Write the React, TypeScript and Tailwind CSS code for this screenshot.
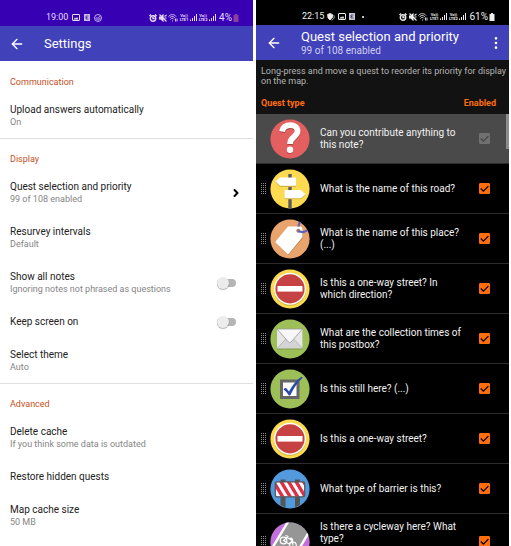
import React from 'react';
import { ArrowLeft, ChevronRight, EllipsisVertical } from 'lucide-react';

// Status bar glyphs
const PictureIcon = () => (
  <svg viewBox="0 0 16 14" className="w-2 h-[7px]">
    <rect x="1" y="1" width="14" height="12" rx="1" fill="none" stroke="currentColor" strokeWidth="2" />
    <path d="M3 11l3-4 2 2 2-3 3 5z" fill="currentColor" />
  </svg>
);

const CardIcon = () => (
  <svg viewBox="0 0 12 14" className="w-[6px] h-[7px]">
    <rect width="12" height="14" fill="currentColor" opacity=".85" />
    <path d="M4 4h5M4 7h3M4 10h5M4 4v6" stroke="#3a2a80" strokeWidth="1.6" fill="none" />
  </svg>
);

const SwirlIcon = () => (
  <svg viewBox="0 0 16 16" className="size-2" fill="none" stroke="currentColor" strokeWidth="1.6">
    <circle cx="8" cy="8" r="7" />
    <path d="M4 8c0 5 8 5 8 0M5 6l3 3 4-5" />
  </svg>
);

const ShieldIcon = () => (
  <svg viewBox="0 0 16 16" className="size-2" fill="none" stroke="currentColor" strokeWidth="1.6">
    <path d="M1 3l5-2 5 2v6l-5 5-4-4z" fill="currentColor" />
    <path d="M13 4c3 4 1 9-4 10" />
  </svg>
);

const AlarmIcon = () => (
  <svg viewBox="0 0 16 16" className="size-2" fill="none" stroke="currentColor" strokeWidth="2.8">
    <circle cx="8" cy="9" r="5.4" />
    <path d="M8 6v3h3M1 4l3-3M15 4l-3-3" />
  </svg>
);

const MuteIcon = () => (
  <svg viewBox="0 0 16 16" className="size-2" fill="none" stroke="currentColor" strokeWidth="2.2">
    <path d="M1 6h3l4-4v12l-4-4H1z" fill="currentColor" />
    <path d="M1 1l14 14M11 5l4-3M11 8h4M11 11l3 2" />
  </svg>
);

const WifiIcon = () => (
  <svg viewBox="0 0 20 16" className="w-[10px] h-2" fill="none" stroke="currentColor" strokeWidth="1.8">
    <path d="M1 5c4-5 12-5 15 0M3 8c3-4 8-4 11 0M5 11c2-3 5-3 7 0M8 14h2M15 9v6M18 15V9" />
  </svg>
);

const SignalIcon = () => (
  <svg viewBox="0 0 14 14" className="w-[7px] h-[7px]" fill="currentColor">
    <path d="M0 11h2v3H0zM4 8h2v6H4zM8 4h2v10H8zM12 0h2v14h-2z" />
  </svg>
);

const BatteryIcon = ({ className }: { className: string }) => (
  <svg viewBox="0 0 12 16" className={className}>
    <path d="M4 0h4v2h3v14H1V2h3z" fill="currentColor" />
  </svg>
);

const Lte = ({ n }: { n: number }) => (
  <span className="w-[10px] text-[4px] leading-[4px] font-bold text-center">
    Vo))
    <br />
    LTE{n}
  </span>
);

function StatusRight({ level, battery }: { level: string; battery: string }) {
  return (
    <div className="ml-auto flex items-center gap-px">
      <AlarmIcon />
      <span />
      <MuteIcon />
      <WifiIcon />
      <Lte n={1} />
      <SignalIcon />
      <Lte n={2} />
      <SignalIcon />
      <span className="ml-[2px] text-[10px]">{level}</span>
      <BatteryIcon className={battery} />
    </div>
  );
}

// Left screen
type Setting = { title: string; note?: string; control?: 'link' | 'switch' };

const sections: { name: string; items: Setting[] }[] = [
  {
    name: 'Communication',
    items: [{ title: 'Upload answers automatically', note: 'On' }],
  },
  {
    name: 'Display',
    items: [
      { title: 'Quest selection and priority', note: '99 of 108 enabled', control: 'link' },
      { title: 'Resurvey intervals', note: 'Default' },
      { title: 'Show all notes', note: 'Ignoring notes not phrased as questions', control: 'switch' },
      { title: 'Keep screen on', control: 'switch' },
      { title: 'Select theme', note: 'Auto' },
    ],
  },
  {
    name: 'Advanced',
    items: [
      { title: 'Delete cache', note: 'If you think some data is outdated' },
      { title: 'Restore hidden quests' },
      { title: 'Map cache size', note: '50 MB' },
    ],
  },
];

function SettingText({ item }: { item: Setting }) {
  return (
    <span className="flex-1 flex flex-col text-left">
      <span className="text-[10px] leading-[14px] text-[#222]">{item.title}</span>
      {item.note && <span className="text-[9px] leading-[11px] text-[#858585]">{item.note}</span>}
    </span>
  );
}

function SettingRow({ item }: { item: Setting }) {
  const size = item.note ? 'h-[45px]' : 'h-[33px]';
  if (item.control === 'switch') {
    return (
      <label className={`flex items-center pl-[10px] pr-[17px] ${size}`}>
        <SettingText item={item} />
        <input
          type="checkbox"
          role="switch"
          className="appearance-none flex items-center w-[19px] h-[8px] rounded-full bg-[#b5b5b5] before:size-3 before:shrink-0 before:rounded-full before:bg-[#ececec] before:shadow-[0_1px_1px_rgba(0,0,0,0.3)] checked:justify-end"
        />
      </label>
    );
  }
  return (
    <button className={`w-full flex items-center pl-[10px] pr-[11px] ${size}`}>
      <SettingText item={item} />
      {item.control === 'link' && <ChevronRight className="size-3 text-black" strokeWidth={4} />}
    </button>
  );
}

function SettingsScreen() {
  return (
    <div className="flex-1 min-w-0 overflow-hidden bg-white">
      <div className="h-[26px] pt-[9px] pl-[46px] pr-[14px] bg-[#3700b3] text-[#e6dcff]">
        <div className="flex items-center gap-1 text-[9px] leading-[17px] h-[17px]">
          <span>19:00</span>
          <PictureIcon />
          <CardIcon />
          <SwirlIcon />
          <StatusRight level="4%" battery="w-[6px] h-2 text-[#8c3fa0]" />
        </div>
      </div>
      <header className="h-[35px] flex items-center pl-[9px] gap-[19px] bg-[#4141ba] text-white">
        <button aria-label="Back">
          <ArrowLeft className="size-4" strokeWidth={2} />
        </button>
        <h1 className="text-[13px] leading-4">Settings</h1>
      </header>
      <div className="pt-px">
        {sections.map((section) => (
          <section key={section.name} className="border-b border-[#e0e0e0] last:border-0">
            <h2 className="h-[31px] pt-[14px] pl-[10px] text-[9px] leading-3 text-[#c8501e]">{section.name}</h2>
            {section.items.map((item) => (
              <SettingRow key={item.title} item={item} />
            ))}
          </section>
        ))}
      </div>
    </div>
  );
}

// Quest pins, all on a 40x40 disc
const Disc = ({ color, children }: { color: string; children: React.ReactNode }) => (
  <svg viewBox="0 0 40 40" className="size-10 shrink-0">
    <circle cx="20" cy="20" r="19.6" fill={color} />
    {children}
  </svg>
);

const NoteQuest = () => (
  <Disc color="#e45f5f">
    <g fill="none" strokeWidth="5.8">
      <path d="M12 13.500c1-5 5-6.300 8.500-6.300 4 0 7 2 7 5.800 0 6-7.500 5.500-7.500 13" stroke="#a84747" />
      <path d="M12 12.500c1-5 5-6.300 8.500-6.300 4 0 7 2 7 5.800 0 6-7.500 5.500-7.500 13" stroke="#fff" />
    </g>
    <circle cx="20" cy="31.700" r="3.200" fill="#a84747" />
    <circle cx="20" cy="30.700" r="3.200" fill="#fff" />
  </Disc>
);

const RoadNameQuest = () => (
  <Disc color="#fddb50">
    <path d="M18.3 5h3.4v34.5h-3.4z" fill="#5b5b5b" />
    <path d="M5.5 13.5l4.5-4h16v8.5H10zM35.5 26.2L31 22H14.5v8.2H31z" fill="#d2b443" />
    <path d="M5.5 12.6l4.5-4h16v8.2H10zM35.5 25.2L31 21H14.5v8.2H31z" fill="#fff" />
  </Disc>
);

const PlaceNameQuest = () => (
  <Disc color="#e9a36c">
    <path d="M6 24l12-15.500h12q3 0 3 3V19L18.500 36z" fill="#bf8558" />
    <path d="M6 22q-1 1 0 2l11 10.500q1 1 2 0L32.500 18V10q0-2.500-2.500-2.500H18z" fill="#fff" />
    <circle cx="28.300" cy="11.800" r="2" fill="#a97c61" />
    <path d="M30 3c-1 2-1.500 3-1.500 4.500M28.500 12c3 1.500 6 1.500 9-.8" fill="none" stroke="#5e5fc0" strokeWidth="2.200" />
  </Disc>
);

const OneWayQuest = () => (
  <Disc color="#fddb50">
    <circle cx="20" cy="20.800" r="16" fill="#cfb040" />
    <circle cx="20" cy="19.800" r="16" fill="#fff" />
    <circle cx="20" cy="19.800" r="14.600" fill="#c74343" />
    <path d="M7.500 17h25v5.600h-25z" fill="#fff" />
  </Disc>
);

const PostboxQuest = () => (
  <Disc color="#9cbf58">
    <path d="M7 11h25.500v19.500H7z" fill="#7c9946" />
    <path d="M7 10h25.500v19.300H7z" fill="#e6e6e6" />
    <path d="M7 29.300l9.500-10h6.500l9.500 10z" fill="#d4d4d4" />
    <path d="M7 29.300l9.500-10M32.500 29.300l-9.500-10" fill="none" stroke="#aaa" strokeWidth=".7" />
    <path d="M7 10h25.500L21 23q-1.300 1.200-2.500 0z" fill="#f7f7f7" stroke="#999" strokeWidth=".8" />
  </Disc>
);

const StillHereQuest = () => (
  <Disc color="#9cbf58">
    <path d="M11.500 12h16.500v16.500H11.500z" fill="#fff" stroke="#666" strokeWidth="3" />
    <path d="M13.500 20.500q2-2.500 3.500-.5l2 2.500Q24 13 31 8q1-.5 1.600.8Q25 16 20.500 26q-1 1-2 0-2-3.500-5-5.500z" fill="#2a4bab" />
  </Disc>
);

const BarrierQuest = () => (
  <Disc color="#529add">
    <path d="M10.500 10.500h5v28l-5-2.500zM25 10.500h5V36l-5 2.500z" fill="#555" />
    <clipPath id="board">
      <rect x="5.500" y="13" width="29" height="14.500" rx="1.500" />
    </clipPath>
    <rect x="5.500" y="13" width="29" height="14.500" rx="1.500" fill="#fff" />
    <path
      d="M2 10l12 20M9.500 10l12 20M17 10l12 20M24.500 10l12 20M32 10l12 20"
      stroke="#dd2f45"
      strokeWidth="3.400"
      clipPath="url(#board)"
    />
    <rect x="5.300" y="12.800" width="29.400" height="15" rx="2" fill="none" stroke="#555" strokeWidth="1.200" />
  </Disc>
);

const CyclewayQuest = () => (
  <Disc color="#c46fdc">
    <clipPath id="disc">
      <circle cx="20" cy="20" r="19.600" />
    </clipPath>
    <g clipPath="url(#disc)">
      <path d="M18-2h26v5L20 44H-8z" fill="#969696" />
      <path d="M18.500-1L-5 38M42 5L20 42" stroke="#fff" strokeWidth="2.400" />
    </g>
    <g fill="none" stroke="#fff" strokeWidth="1.200">
      <circle cx="13.500" cy="18.500" r="3.300" />
      <circle cx="23" cy="23.500" r="3.300" />
      <path d="M13.500 18.500l3.500-3 5.500 3-3.500 3.500zM23 23.500L22 16.500l-2-.5M15.500 13.500l3 1" />
    </g>
  </Disc>
);

const quests: { label: string; icon: React.ReactNode; locked?: boolean }[] = [
  { label: 'Can you contribute anything to this note?', icon: <NoteQuest />, locked: true },
  { label: 'What is the name of this road?', icon: <RoadNameQuest /> },
  { label: 'What is the name of this place? (...)', icon: <PlaceNameQuest /> },
  { label: 'Is this a one-way street? In which direction?', icon: <OneWayQuest /> },
  { label: 'What are the collection times of this postbox?', icon: <PostboxQuest /> },
  { label: 'Is this still here? (...)', icon: <StillHereQuest /> },
  { label: 'Is this a one-way street?', icon: <OneWayQuest /> },
  { label: 'What type of barrier is this?', icon: <BarrierQuest /> },
  { label: 'Is there a cycleway here? What type?', icon: <CyclewayQuest /> },
];

const Grip = ({ hidden }: { hidden?: boolean }) => (
  <svg viewBox="0 0 5 11" className={hidden ? 'w-[5px] h-[11px] invisible' : 'w-[5px] h-[11px]'}>
    <path d="M.5 0v11M2.500 0v11M4.500 0v11" stroke="#8c8c8c" strokeWidth="1" strokeDasharray="1 1" />
  </svg>
);

function QuestScreen() {
  return (
    <div className="flex-1 min-w-0 flex flex-col overflow-hidden bg-black">
      <div className="h-[25px] shrink-0 pt-[8px] pl-[46px] pr-[14px] text-[#eee]">
        <div className="flex items-center gap-[3px] text-[9px] leading-[17px] h-[17px]">
          <span>22:15</span>
          <ShieldIcon />
          <PictureIcon />
          <CardIcon />
          <span className="ml-1 size-[2px] rounded-full bg-white" />
          <StatusRight level="61%" battery="w-[6px] h-2" />
        </div>
      </div>
      <header className="h-[35px] shrink-0 flex items-center pl-[10px] pr-[5px] bg-[#4141ba] text-white">
        <button aria-label="Back">
          <ArrowLeft className="size-4" strokeWidth={2} />
        </button>
        <div className="flex-1 pl-[19px] whitespace-nowrap">
          <h1 className="text-[13px] leading-4">Quest selection and priority</h1>
          <p className="text-[10px] leading-3 text-[#cfcff0]">99 of 108 enabled</p>
        </div>
        <button aria-label="More options">
          <EllipsisVertical className="size-4" strokeWidth={2} />
        </button>
      </header>
      <div className="h-[54px] shrink-0 pt-[6px] pl-[5px] bg-[#121212]">
        <p className="text-[9px] leading-[10px] text-[#b4b4b4] whitespace-nowrap">
          Long-press and move a quest to reorder its priority for display
          <br />
          on the map.
        </p>
        <div className="flex justify-between mt-[11px] pr-[13px] text-[9px] leading-3 font-bold text-[#ff6d0d]">
          <span>Quest type</span>
          <span>Enabled</span>
        </div>
      </div>
      <div className="relative flex-1 min-h-0 overflow-hidden">
        <ul>
          {quests.map((quest) => (
            <li
              key={quest.label}
              className="h-[50px] last:h-[56px] border-b border-[#2c2c2c] first:bg-[#4a4a4a] last:[&_span]:self-start last:[&_span]:pt-[7px]"
            >
              <label className="h-full flex items-center pl-[5px] pr-[19px]">
                <Grip hidden={quest.locked} />
                <div className="pl-1 pr-[10px]">{quest.icon}</div>
                <span className="flex-1 pt-px pr-[16px] text-[10px] leading-[12px] text-[#f2f2f2]">{quest.label}</span>
                <div className="grid *:col-start-1 *:row-start-1">
                  <input
                    type="checkbox"
                    defaultChecked
                    disabled={quest.locked}
                    className="peer appearance-none size-[11px] rounded-[1px] border border-[#ff6d0d] checked:bg-[#ff6d0d] disabled:border-[#707070] disabled:checked:bg-[#707070]"
                  />
                  <svg
                    viewBox="0 0 11 11"
                    className="size-[11px] pointer-events-none invisible peer-checked:visible text-black peer-disabled:text-[#444]"
                  >
                    <path d="M1.800 5.500l2.600 2.600 5-5" fill="none" stroke="currentColor" strokeWidth="1.300" />
                  </svg>
                </div>
              </label>
            </li>
          ))}
        </ul>
        <div className="absolute right-0 top-0 w-[3px] h-[35px] bg-[#8d8d8d]" />
      </div>
    </div>
  );
}

export default function App() {
  return (
    <div className="h-screen flex gap-[3px] pr-[2px] bg-white overflow-hidden font-[Roboto,sans-serif]">
      <SettingsScreen />
      <QuestScreen />
    </div>
  );
}
